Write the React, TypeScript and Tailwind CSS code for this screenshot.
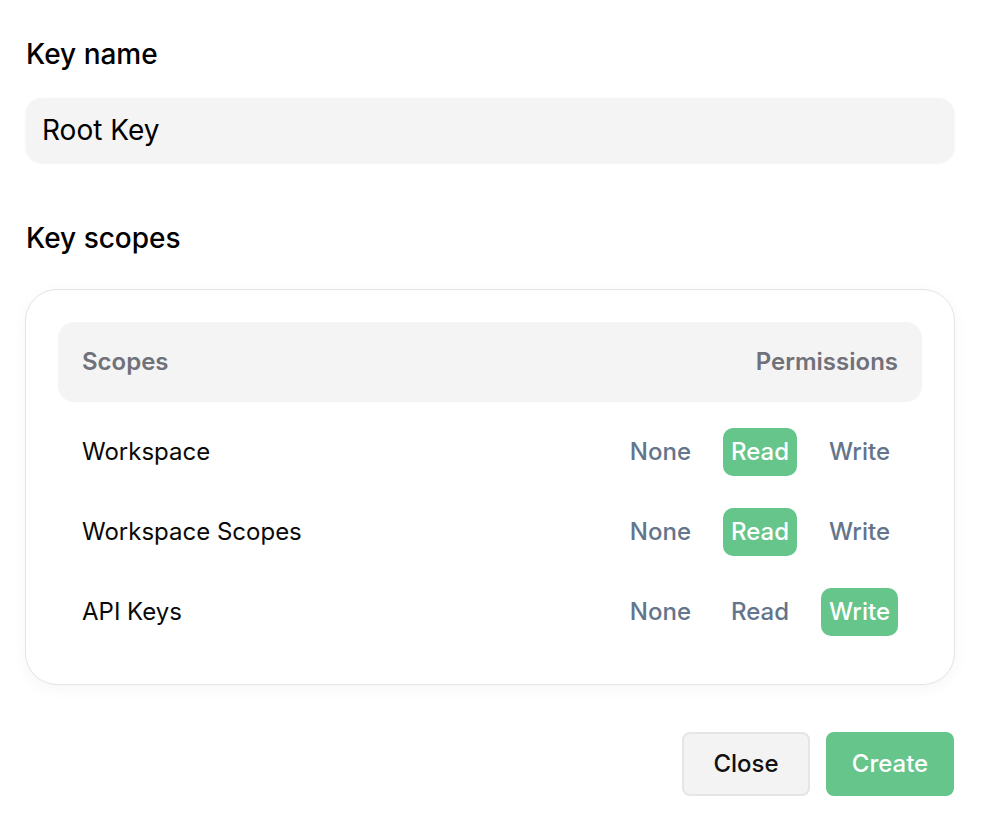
import React from "react";

const rows: { name: string; value: "None" | "Read" | "Write" }[] = [
  { name: "Workspace", value: "Read" },
  { name: "Workspace Scopes", value: "Read" },
  { name: "API Keys", value: "Write" },
];

export default function App() {
  return (
    <div
      className="min-h-screen bg-white px-[26px] pt-[38px] text-black"
      style={{ fontFamily: "Inter, 'Noto Sans', sans-serif" }}
    >
      <div className="w-[928px]">
        <div className="text-[28px] leading-[32px] font-medium">Key name</div>
        <div className="mt-[28px] h-[64px] rounded-[16px] bg-[#f4f4f4] shadow-[0_1px_3px_rgba(0,0,0,0.08)] flex items-center px-[16px] text-[28px]">
          Root Key
        </div>
        <div className="mt-[60px] text-[28px] leading-[32px] font-medium">Key scopes</div>
        <div className="mt-[35px] -mx-[1px] rounded-[32px] border border-[#e4e4e7] bg-white p-[32px] shadow-[0_4px_16px_rgba(0,0,0,0.04)]">
          <div className="h-[80px] rounded-[16px] bg-[#f4f4f4] flex items-center justify-between px-[24px] text-[24px] font-semibold text-[#71717a]">
            <span>Scopes</span>
            <span>Permissions</span>
          </div>
          <div className="mt-[10px] flex flex-col">
            {rows.map((r) => (
              <div key={r.name} className="h-[80px] flex items-center justify-between px-[24px]">
                <span className="text-[24px] text-[#0a0a0a]">{r.name}</span>
                <div className="flex items-center gap-[24px]">
                  {(["None", "Read", "Write"] as const).map((p) => (
                    <span
                      key={p}
                      className={
                        p === r.value
                          ? "h-[48px] flex items-center px-[8px] rounded-[10px] bg-[#65c58a] text-white text-[24px] font-medium"
                          : "h-[48px] flex items-center px-[8px] rounded-[10px] text-[#64748b] text-[24px] font-medium"
                      }
                    >
                      {p}
                    </span>
                  ))}
                </div>
              </div>
            ))}
          </div>
        </div>
        <div className="mt-[47px] flex justify-end gap-[16px]">
          <button className="h-[64px] w-[128px] rounded-[8px] border-2 border-[#e5e5e5] bg-[#f3f3f3] text-[24px] font-medium text-[#111]">
            Close
          </button>
          <button className="h-[64px] w-[128px] rounded-[8px] bg-[#65c58a] text-[24px] font-medium text-white">
            Create
          </button>
        </div>
      </div>
    </div>
  );
}
